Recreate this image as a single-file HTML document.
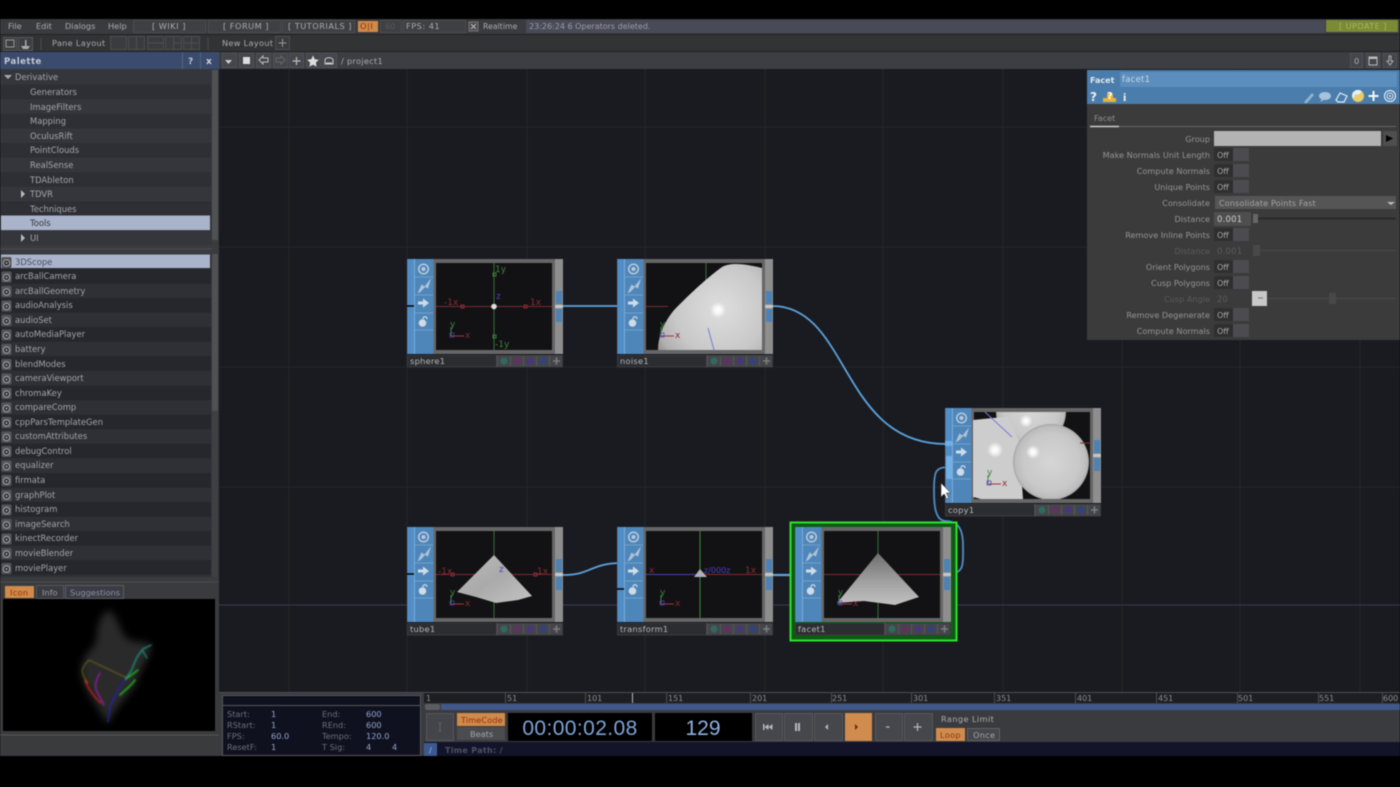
<!DOCTYPE html>
<html><head><meta charset="utf-8"><title>TouchDesigner</title>
<style>
html,body{margin:0;padding:0;background:#000;overflow:hidden}
svg{display:block}
#root{filter:blur(.5px)}
text{font-family:"DejaVu Sans",sans-serif;font-size:8.2px;fill:#a5a7ab}
.m{font-size:8.2px;fill:#a9abae}
.t{font-size:8.4px;fill:#a3a6aa}
.l{font-size:8.4px;fill:#a2a4aa}
.lab{font-size:8.15px;fill:#959595;text-anchor:end}
.dim{fill:#5a5a5a}
.off{font-size:8px;fill:#a8a8a8}
.nn{font-size:8.3px;fill:#b5b6b8;letter-spacing:.25px}
.r{fill:#8a2c34;font-size:9px}.g{fill:#3f8040;font-size:9px}.b{fill:#4a40c0;font-size:9px}
.rul{font-size:8px;fill:#8b8d92}
.inf{font-size:8.2px;fill:#6d6f78}
.val{font-size:8.2px;fill:#92a5d2}
</style></head>
<body>
<svg id="root" xmlns="http://www.w3.org/2000/svg" width="1400" height="787" viewBox="0 0 1400 787">
<defs>
<radialGradient id="hl"><stop offset="0" stop-color="#fff"/><stop offset=".35" stop-color="#fff" stop-opacity=".85"/><stop offset="1" stop-color="#fff" stop-opacity="0"/></radialGradient>
<radialGradient id="sph2"><stop offset="0" stop-color="#d6d6d6"/><stop offset=".75" stop-color="#c8c8c8"/><stop offset=".94" stop-color="#bcbcbc"/><stop offset="1" stop-color="#a4a4a4"/></radialGradient>
<radialGradient id="blob" gradientUnits="userSpaceOnUse" cx="74" cy="46" r="76"><stop offset="0" stop-color="#dedede"/><stop offset=".6" stop-color="#c8c8c8"/><stop offset=".85" stop-color="#b2b2b2"/><stop offset="1" stop-color="#8a8a8a"/></radialGradient>
<linearGradient id="cone" x1="0" y1="0" x2="1" y2="1"><stop offset="0" stop-color="#bcbcbc"/><stop offset=".5" stop-color="#aaa"/><stop offset="1" stop-color="#c4c4c4"/></linearGradient>
<linearGradient id="cone2" x1="0" y1="0" x2="0" y2="1"><stop offset="0" stop-color="#6e6e6e"/><stop offset=".55" stop-color="#a0a0a0"/><stop offset="1" stop-color="#c2c2c2"/></linearGradient>
<filter id="pc"><feGaussianBlur stdDeviation=".7"/></filter>
<filter id="pc2"><feGaussianBlur stdDeviation="4"/></filter>
<g id="opi"><rect x="2.500" y="3" width="10" height="11" rx="1.500" fill="#55565a"/><circle cx="7.500" cy="9" r="3.800" fill="#303135"/><circle cx="7.500" cy="9" r="3.200" fill="none" stroke="#a0a1a4" stroke-width="1.100"/><circle cx="7.500" cy="9" r="1" fill="#a0a1a4"/></g>
<g id="node">
<rect width="156" height="95" fill="#666"/>
<rect x="0.500" width="26" height="95" fill="#4f86ba"/>
<rect x="0.500" width="7" height="95" fill="#518ec8"/>
<path d="M7.500 0v95" stroke="#8ab3d8" stroke-width=".8"/>
<path d="M8 18h18M8 36h18M8 54h18M8 71h18" stroke="#7da8cf" stroke-width=".8"/>
<rect x="26.500" width="122" height="95" fill="#666"/>
<rect x="29" y="4" width="116" height="87" fill="#121214"/>
<rect x="148" width="8" height="95" fill="#8e8e8e"/>
<rect x="149" y="32" width="6" height="13" fill="#4c82b4"/><rect x="149" y="50" width="6" height="13" fill="#4c82b4"/>
<rect x="148" y="46" width="8" height="3" fill="#c6c6c6"/>
<circle cx="16.500" cy="10" r="4.800" fill="none" stroke="#b8cadb" stroke-width="1.500"/><circle cx="16.500" cy="10" r="2" fill="#b8cadb"/>
<path d="M10.500 34.500L14.500 25.500 17.500 27.500 24 19.500 21 29.500 18 28 14 32.500z" fill="#aec3d6"/>
<path d="M11 42.500h5v-3l6 4.500-6 4.500v-3h-5z" fill="#cfdbe6"/>
<circle cx="15.500" cy="64" r="3.800" fill="#cfdbe6"/><path d="M16 60c0-3 4-3 4 0" fill="none" stroke="#cfdbe6" stroke-width="1.300"/>
<rect y="96" width="156" height="12.500" fill="#3a3b3e"/>
<rect x="1" y="96.500" width="88" height="11" fill="#2c2d31"/>
<rect x="90" y="96.500" width="65" height="11" fill="#44454a"/>
<path d="M90 96v12M103.500 97v10M116.500 97v10M129.500 97v10M142.500 97v10" stroke="#55565a"/>
<circle cx="97" cy="102" r="3.500" fill="#2f6a5e"/><circle cx="110" cy="102" r="3.500" fill="#633062"/><circle cx="123" cy="102" r="3.500" fill="#48367a"/><circle cx="136" cy="102" r="3.500" fill="#30447a"/>
<path d="M149.500 98.500v7M146 102h7" stroke="#7c7c7c" stroke-width="1.600"/>
</g>
<g id="axes"><path d="M0 0h13" stroke="#a83438"/><path d="M0 0v-9" stroke="#3f8a3f"/><rect x="-1" y="-3" width="4" height="4" fill="none" stroke="#4a40c0" stroke-width=".7"/><text x="-1" y="-9" class="g">y</text><text x="14" y="2" class="r">x</text></g>
<path id="cur" d="M0 0v14l3.200-3 2.500 5 2-1-2.400-5h4.400z" fill="#fff" stroke="#222" stroke-width=".5"/>
</defs>

<rect width="1400" height="787" fill="#000"/>
<!-- network -->
<rect x="219" y="69" width="1181" height="624" fill="#1a1b20"/>
<g stroke="#24252a" stroke-width="1"><path d="M289 69v624M407 69v624M527 69v624M645 69v624M765 69v624M883 69v624M1003 69v624M1122 69v624M1240 69v624M1360 69v624"/><path d="M219 127h1181M219 247h1181M219 367h1181M219 487h1181"/></g>
<path d="M219 605h1181" stroke="#3a3b52"/>

<!-- top bar -->
<rect y="19" width="1400" height="15" fill="#3a3b3e"/>
<rect y="34" width="1400" height="1" fill="#232325"/>
<rect y="35" width="1400" height="17" fill="#323335"/>
<rect y="51" width="1400" height="1" fill="#222"/>
<text x="8" y="29" class="m">File</text><text x="36" y="29" class="m">Edit</text><text x="65" y="29" class="m">Dialogs</text><text x="108" y="29" class="m">Help</text>
<g fill="#3f4043" stroke="#4b4c50"><rect x="133.500" y="20.500" width="72" height="12"/><rect x="208.500" y="20.500" width="72" height="12"/><rect x="282.500" y="20.500" width="72" height="12"/><rect x="380.500" y="20.500" width="21" height="12"/><rect x="403.500" y="20.500" width="62" height="12"/></g>
<text x="152" y="29" class="m" letter-spacing=".5">[ WIKI ]</text><text x="223" y="29" class="m" letter-spacing=".5">[ FORUM ]</text><text x="288" y="29" class="m" letter-spacing=".5">[ TUTORIALS ]</text>
<rect x="358" y="21" width="20" height="11" fill="#d08a48"/><text x="360" y="29" style="fill:#8a2f14" letter-spacing=".6">O|I</text>
<text x="385" y="29" style="fill:#57585b">60</text><text x="406" y="29" class="m" letter-spacing=".5">FPS: 41</text>
<rect x="469" y="22" width="9" height="9" fill="#4a4a4e" stroke="#777"/><path d="M471 24l5 5M476 24l-5 5" stroke="#bbb"/>
<text x="483" y="29" class="m" style="font-size:7.800px">Realtime</text>
<rect x="526" y="20" width="799" height="13" fill="#494a57"/><text x="529" y="29" style="fill:#9b9da6;font-size:8px">23:26:24 6 Operators deleted.</text>
<rect x="1326" y="20" width="72" height="12" fill="#7a8a35"/><text x="1339" y="29" style="fill:#a9b563" letter-spacing=".4">[ UPDATE ]</text>

<g fill="#3d3e42" stroke="#55565a"><rect x="3.500" y="37.500" width="13" height="13"/><rect x="18.500" y="37.500" width="14" height="13"/></g>
<rect x="6" y="40" width="8" height="7" fill="none" stroke="#999"/><path d="M21 46h9l-2 3h-5zM25 40h1.500v6H25z" fill="#aaa"/>
<path d="M41 38v12M208 38v12" stroke="#4b4c50"/>
<text x="52" y="46" class="m" letter-spacing=".3">Pane Layout</text>
<g fill="#3a3b3e" stroke="#4d4e52"><rect x="110.500" y="36.500" width="16" height="13"/><rect x="128.500" y="36.500" width="16" height="13"/><rect x="147.500" y="36.500" width="16" height="13"/><rect x="165.500" y="36.500" width="16" height="13"/><rect x="183.500" y="36.500" width="16" height="13"/></g>
<path d="M136.500 37v12M147.500 43h16M173.500 37v12M173.500 43h8M191.500 37v12M183.500 43h16" stroke="#4d4e52"/>
<text x="222" y="46" class="m" letter-spacing=".3">New Layout</text>
<rect x="275.500" y="36.500" width="14" height="13" fill="#3a3b3e" stroke="#4d4e52"/><path d="M282.500 39v8M278.500 43h8" stroke="#999"/>

<!-- network bar -->
<rect x="219" y="52" width="1181" height="17" fill="#3c3e43"/>
<g fill="#44464b" stroke="#4f5156"><rect x="222.500" y="53.500" width="14" height="14"/><rect x="239.500" y="53.500" width="14" height="14"/><rect x="256.500" y="53.500" width="14" height="14"/><rect x="273.500" y="53.500" width="14" height="14"/><rect x="289.500" y="53.500" width="14" height="14"/><rect x="306.500" y="53.500" width="14" height="14"/><rect x="322.500" y="53.500" width="14" height="14"/><rect x="1350.500" y="53.500" width="12" height="14"/><rect x="1366.500" y="53.500" width="13" height="14"/><rect x="1383.500" y="53.500" width="13" height="14"/></g>
<path d="M225 60h7l-3.500 4z" fill="#ccc"/><rect x="243" y="57" width="7" height="7" fill="#ddd"/>
<path d="M259 60l4-4v2h5v4h-5v2z" fill="none" stroke="#bbb"/><path d="M285 60l-4-4v2h-5v4h5v2z" fill="none" stroke="#666"/>
<path d="M296.500 57v8M292.500 61h8" stroke="#bbb" stroke-width="1.200"/>
<path d="M313 55.500l1.800 3.700 4 .6-2.900 2.800.7 4-3.600-1.900-3.600 1.900.7-4-2.900-2.800 4-.6z" fill="#ddd"/>
<path d="M325 64v-4c0-3 8-3 8 0v4zM326 63h6" fill="none" stroke="#ccc"/>
<text x="341" y="64" class="m" letter-spacing=".3">/ project1</text>
<text x="1354" y="64" class="m">0</text><rect x="1369" y="57" width="8" height="8" fill="none" stroke="#bbb"/><path d="M1369 58h8" stroke="#bbb" stroke-width="2"/><path d="M1389 56h2v5h2l-3 4-3-4h2z" fill="none" stroke="#aaa"/>

<!-- palette -->
<rect y="52" width="219" height="17" fill="#3b4b6d"/>
<rect x="182" y="52" width="1" height="17" fill="#52617f"/><rect x="200" y="52" width="1" height="17" fill="#52617f"/>
<text x="4" y="64" style="font-weight:bold;fill:#c4c8d2;font-size:8.500px" letter-spacing=".5">Palette</text>
<text x="188" y="64" style="font-weight:bold;fill:#c0c4cf;font-size:9px">?</text><text x="206" y="64" style="font-weight:bold;fill:#d2d5dc;font-size:9px">x</text>
<rect y="69" width="219" height="687" fill="#36373a"/>
<g fill="#34363b"><rect y="70" width="211" height="14.600"/><rect y="99.200" width="211" height="14.600"/><rect y="128.400" width="211" height="14.600"/><rect y="157.600" width="211" height="14.600"/><rect y="186.800" width="211" height="14.600"/><rect y="230.600" width="211" height="14.600"/></g>
<g fill="#2d2f34"><rect y="84.600" width="211" height="14.600"/><rect y="113.800" width="211" height="14.600"/><rect y="143" width="211" height="14.600"/><rect y="172.200" width="211" height="14.600"/><rect y="201.400" width="211" height="14.600"/></g>
<rect x="1" y="215.500" width="209" height="14.600" fill="#a9b3c9"/>
<rect x="212" y="70" width="6" height="170" fill="#505154"/><rect x="212" y="240" width="6" height="8" fill="#3a3b3d"/>
<path d="M4 75h8l-4 4z" fill="#aaa"/>
<text x="15" y="80" class="t">Derivative</text><text x="30" y="95" class="t">Generators</text><text x="30" y="110" class="t">ImageFilters</text><text x="30" y="124" class="t">Mapping</text><text x="30" y="139" class="t">OculusRift</text><text x="30" y="153" class="t">PointClouds</text><text x="30" y="168" class="t">RealSense</text><text x="30" y="183" class="t">TDAbleton</text><text x="30" y="197" class="t">TDVR</text><text x="30" y="212" class="t">Techniques</text><text x="30" y="226" class="t" style="fill:#34363c">Tools</text><text x="30" y="241" class="t">UI</text>
<path d="M21 190v8l4-4zM21 234v8l4-4z" fill="#bbb"/>
<rect y="245" width="219" height="9" fill="#3a3b3e"/><path d="M0 249h212" stroke="#4b4c50"/>
<!-- list -->
<g fill="#2e3036"><rect y="254" width="211" height="323"/></g>
<g fill="#25272d"><rect y="269" width="211" height="14.600"/><rect y="298" width="211" height="14.600"/><rect y="327" width="211" height="14.600"/><rect y="356" width="211" height="14.600"/><rect y="385.500" width="211" height="14.600"/><rect y="414.500" width="211" height="14.600"/><rect y="443.500" width="211" height="14.600"/><rect y="473" width="211" height="14.600"/><rect y="502" width="211" height="14.600"/><rect y="531" width="211" height="14.600"/><rect y="560" width="211" height="14.600"/></g>
<rect x="1" y="254.500" width="209" height="13.500" fill="#a9b3c9"/>
<rect x="212" y="254" width="6" height="157" fill="#505154"/><rect x="212" y="411" width="6" height="166" fill="#3f4043"/>
<use href="#opi" x="-1" y="254"/><use href="#opi" x="-1" y="268.500"/><use href="#opi" x="-1" y="283"/><use href="#opi" x="-1" y="297.500"/><use href="#opi" x="-1" y="312"/><use href="#opi" x="-1" y="326.500"/><use href="#opi" x="-1" y="341"/><use href="#opi" x="-1" y="356"/><use href="#opi" x="-1" y="370.500"/><use href="#opi" x="-1" y="385"/><use href="#opi" x="-1" y="399.500"/><use href="#opi" x="-1" y="414"/><use href="#opi" x="-1" y="428.500"/><use href="#opi" x="-1" y="443"/><use href="#opi" x="-1" y="457.500"/><use href="#opi" x="-1" y="472"/><use href="#opi" x="-1" y="487"/><use href="#opi" x="-1" y="501.500"/><use href="#opi" x="-1" y="516"/><use href="#opi" x="-1" y="530.500"/><use href="#opi" x="-1" y="545"/><use href="#opi" x="-1" y="560"/>
<text x="15" y="265" class="l" style="fill:#4a5064">3DScope</text><text x="15" y="279" class="l">arcBallCamera</text><text x="15" y="294" class="l">arcBallGeometry</text><text x="15" y="308" class="l">audioAnalysis</text><text x="15" y="323" class="l">audioSet</text><text x="15" y="337" class="l">autoMediaPlayer</text><text x="15" y="352" class="l">battery</text><text x="15" y="367" class="l">blendModes</text><text x="15" y="381" class="l">cameraViewport</text><text x="15" y="396" class="l">chromaKey</text><text x="15" y="410" class="l">compareComp</text><text x="15" y="425" class="l">cppParsTemplateGen</text><text x="15" y="439" class="l">customAttributes</text><text x="15" y="454" class="l">debugControl</text><text x="15" y="468" class="l">equalizer</text><text x="15" y="483" class="l">firmata</text><text x="15" y="498" class="l">graphPlot</text><text x="15" y="512" class="l">histogram</text><text x="15" y="527" class="l">imageSearch</text><text x="15" y="541" class="l">kinectRecorder</text><text x="15" y="556" class="l">movieBlender</text><text x="15" y="571" class="l">moviePlayer</text>
<rect y="577" width="219" height="179" fill="#3a3b3d"/><path d="M0 582h219" stroke="#4b4c4e"/>
<rect x="5" y="586" width="29" height="12" fill="#d08a4a"/><text x="10" y="595.500" style="fill:#8c3312" letter-spacing=".3">Icon</text>
<rect x="36.500" y="585.500" width="27" height="13" fill="#3a3b40" stroke="#55565c"/><text x="42" y="595.500" style="fill:#9a9ca2">Info</text>
<rect x="65.500" y="585.500" width="58" height="13" fill="#3a3b44" stroke="#5a5c66"/><text x="70" y="595.500" style="fill:#8e91a0">Suggestions</text>
<rect x="3" y="599" width="212" height="132" fill="#000"/>
<path d="M0 735h219" stroke="#555"/>
<!-- point cloud -->
<g fill="none" stroke-linecap="round">
<path d="M107 611C115 610 118 625 125 637C135 645 150 640 151 646C150 655 140 670 135 685C125 700 112 710 108 725C100 708 88 695 83 680C78 665 85 655 95 645C98 635 96 620 107 611Z" fill="#555" filter="url(#pc2)" opacity=".5"/>
<g filter="url(#pc)" opacity=".85">
<path d="M89 660l38 18" stroke="#a8901c" stroke-width=".8" opacity=".8"/><path d="M89 660c-5 5-8 10-6 14 1 4 3 6 5 9" stroke="#7d7b18" stroke-width="1"/>
<path d="M85 681c4 9 9 16 16 22" stroke="#d01e1e" stroke-width="1.600"/>
<path d="M100 673c-4 7-6 13-3 19 2 4 5 8 7 13" stroke="#a01eb4" stroke-width="1.400"/>
<path d="M126 678c-6 8-13 20-16 30l-2 14" stroke="#2020c0" stroke-width="1.400"/>
<path d="M138 670l-12 9M135 680c-4 6-10 10-15 15" stroke="#1ec81e" stroke-width="1.600"/>
<path d="M151 645l-8 4-6 8-6 14c-2 3-3 5-5 7" stroke="#1f9a86" stroke-width="1.500"/><path d="M142 650l5 8" stroke="#1f9a86" stroke-width="1.200"/>
</g></g>

<!-- wires -->
<g fill="none" stroke="#5ba3dd" stroke-width="1.800">
<path d="M563 306H620"/>
<path d="M772 306C850 306 840 444 946 444"/>
<path d="M563 575C592 575 590 563 622 563"/>
<path d="M772 575H798" stroke-width="2.200"/>
<path d="M952 573C965 573 963 560 963 545C963 525 955 521 945 521C935 520 934 505 934 490C934 470 936 468 948 467" stroke="#4c8ec6"/>
</g>

<!-- facet selection -->
<rect x="790.500" y="522.500" width="166" height="118" fill="#0e5a14" stroke="#2fe02f" stroke-width="2"/>

<!-- sphere1 -->
<g transform="translate(407,259)"><use href="#node"/>
<path d="M0 47h7" stroke="#000" stroke-width="1.500"/>
<svg x="29" y="4" width="116" height="87">
<path d="M0 43.500h116" stroke="#7a2a30"/><path d="M58 0v87" stroke="#3a6e3a"/>
<rect x="25" y="42" width="3" height="3" fill="none" stroke="#8a2c34"/><rect x="88" y="42" width="3" height="3" fill="none" stroke="#8a2c34"/>
<rect x="57" y="10" width="3" height="3" fill="none" stroke="#3a7a3a"/><rect x="57" y="72" width="3" height="3" fill="none" stroke="#3a7a3a"/>
<circle cx="58" cy="43.500" r="2.800" fill="#ddd"/>
<text x="8" y="42" class="r">-1x</text><text x="94" y="42" class="r">1x</text><text x="59" y="9" class="g">1y</text><text x="59" y="84" class="g">-1y</text><text x="60" y="36" class="b">z</text>
<use href="#axes" x="15" y="73"/></svg>
<text x="3" y="105" class="nn">sphere1</text></g>

<!-- noise1 -->
<g transform="translate(617,259)"><use href="#node"/>
<svg x="29" y="4" width="116" height="87">
<path d="M0 43.500h22" stroke="#7a2a30"/><path d="M60 0v25" stroke="#3a6e3a"/>
<path d="M12 87C12 70 22 52 33 42C45 30 62 14 76 4C85 -1 100 1 116 5V87Z" fill="url(#blob)"/>
<circle cx="72" cy="47" r="8" fill="url(#hl)"/>
<path d="M62 65l6 22" stroke="#7a78df"/>
<use href="#axes" x="15" y="73"/></svg>
<text x="3" y="105" class="nn">noise1</text></g>

<!-- tube1 -->
<g transform="translate(407,527)"><use href="#node"/>
<path d="M0 47h7" stroke="#000" stroke-width="1.500"/>
<svg x="29" y="4" width="116" height="87">
<path d="M0 43.500h116" stroke="#7a2a30"/><path d="M58 0v87" stroke="#3a6e3a"/>
<rect x="15" y="42" width="3" height="3" fill="none" stroke="#8a2c34"/><rect x="98" y="42" width="3" height="3" fill="none" stroke="#8a2c34"/>
<text x="2" y="43" class="r">-1x</text><text x="101" y="43" class="r">1x</text>
<path d="M58 24L21 61 40 66 60 72 82 69 96 65z" fill="url(#cone)"/>
<text x="63" y="41" class="b">z</text>
<use href="#axes" x="15" y="73"/></svg>
<text x="3" y="105" class="nn">tube1</text></g>

<!-- transform1 -->
<g transform="translate(617,527)"><use href="#node"/>
<path d="M0 62h7" stroke="#000" stroke-width="1.500"/>
<svg x="29" y="4" width="116" height="87">
<path d="M0 43.500h116" stroke="#7a2a30"/><path d="M0 43.500h50" stroke="#4a3fb0"/><path d="M54 0v87" stroke="#3c8a3c"/>
<text x="3" y="42" class="r">x</text><text x="99" y="42" class="r">1x</text>
<text x="58" y="42" class="b" style="font-size:8px">z/000z</text>
<path d="M54 38l-6 8h13z" fill="#b0b0b8"/>
<use href="#axes" x="15" y="73"/></svg>
<text x="3" y="105" class="nn">transform1</text></g>

<!-- facet1 -->
<g transform="translate(795,527)"><use href="#node"/>
<svg x="29" y="4" width="116" height="87">
<path d="M0 43.500h116" stroke="#7a2a30"/><path d="M54 0v87" stroke="#3a6e3a"/><path d="M40 43.500h14" stroke="#4a3fb0"/>
<path d="M54 22L13 72 40 70 71 74 95 66z" fill="url(#cone2)"/>
<use href="#axes" x="15" y="73"/></svg>
<text x="3" y="105" class="nn">facet1</text></g>

<!-- copy1 -->
<g transform="translate(945,408)"><use href="#node"/>
<rect x="0" y="33" width="8" height="5" fill="#6fb0e8"/>
<rect x="1" y="48" width="6" height="23" fill="#6fb0e8"/>
<svg x="28" y="4" width="117" height="87">
<ellipse cx="58" cy="0" rx="35" ry="34" fill="url(#sph2)"/>
<path d="M0 8L20 6 35 5 46 30 50 87H8L0 85Z" fill="#cdcdcd"/>
<ellipse cx="78" cy="50" rx="38" ry="38" fill="url(#sph2)"/>
<circle cx="22" cy="38" r="8" fill="url(#hl)"/><circle cx="53" cy="9" r="6.500" fill="url(#hl)"/><circle cx="60" cy="40" r="7" fill="url(#hl)"/>
<path d="M12 0l27 25" stroke="#7a78df"/>
<path d="M107 31h10" stroke="#8a2c34"/>
<use href="#axes" x="15" y="72"/></svg>
<text x="3" y="105" class="nn">copy1</text></g>
<use href="#cur" x="941" y="483"/>

<!-- params -->
<rect x="1087" y="70" width="313" height="270" fill="#3b3b3b"/>
<rect x="1087" y="70" width="313" height="34" fill="#4a7dab"/>
<rect x="1120" y="72" width="277" height="15" fill="#5b8ebd"/>
<text x="1090" y="83" style="font-weight:bold;fill:#e2e8ee;font-size:8px">Facet</text><text x="1122" y="82" style="fill:#c9d8e6;font-size:8.400px" letter-spacing=".3">facet1</text>
<text x="1090" y="101" style="font-weight:bold;fill:#f0f0f0;font-size:12px">?</text>
<path d="M1103 102v-4h4v-3c0-3 6-3 6 0v3h3v4z" fill="#e5b53a"/><text x="1107" y="99" style="font-weight:bold;fill:#fff;font-size:10px">?</text>
<text x="1123" y="101" style="font-weight:bold;fill:#f0f0f0;font-size:12px;font-family:'Liberation Serif',serif">i</text>
<path d="M1305 101l7-8 2 2-7 8h-3z" fill="#8fb3d1"/>
<ellipse cx="1325" cy="96" rx="6" ry="4" fill="#a7c3da"/><path d="M1322 99l-2 3 4-2z" fill="#a7c3da"/>
<path d="M1336 100l4-7 7 3-3 6-6 0z" fill="none" stroke="#e4eef5" stroke-width="1.200"/>
<circle cx="1358" cy="96" r="6" fill="#e8cc6a"/><path d="M1352 97a6 6 0 0 1 10-5.500l-3 3h-4l-1 3.500z" fill="#e4eef5"/>
<path d="M1373.500 91v10M1368.500 96h10" stroke="#f4f6f8" stroke-width="2"/>
<circle cx="1390" cy="96" r="5.500" fill="none" stroke="#dde6ee" stroke-width="1.200"/><circle cx="1390" cy="96" r="3" fill="none" stroke="#dde6ee"/><circle cx="1390" cy="96" r="1" fill="#dde6ee"/>
<text x="1094" y="121" style="fill:#8f8f8f;font-size:8px">Facet</text>
<path d="M1090 126.500h29" stroke="#ccc" stroke-width="1.500"/><path d="M1119 126.500h277" stroke="#666"/>
<rect x="1214" y="131" width="167" height="15" fill="#b3b3b3"/><rect x="1383" y="131" width="14" height="15" fill="#4e4e4e"/><path d="M1386 135v7l7-3.500z" fill="#000"/>
<text x="1210" y="142" class="lab">Group</text>
<text x="1210" y="158" class="lab">Make Normals Unit Length</text>
<text x="1210" y="174" class="lab">Compute Normals</text>
<text x="1210" y="190" class="lab">Unique Points</text>
<text x="1210" y="206" class="lab">Consolidate</text>
<text x="1210" y="222" class="lab">Distance</text>
<text x="1210" y="238" class="lab">Remove Inline Points</text>
<text x="1210" y="254" class="lab dim">Distance</text>
<text x="1210" y="270" class="lab">Orient Polygons</text>
<text x="1210" y="286" class="lab">Cusp Polygons</text>
<text x="1210" y="302" class="lab dim">Cusp Angle</text>
<text x="1210" y="318" class="lab">Remove Degenerate</text>
<text x="1210" y="334" class="lab">Compute Normals</text>
<g fill="#2f2f2f"><rect x="1214" y="148" width="19" height="13"/><rect x="1214" y="164" width="19" height="13"/><rect x="1214" y="180" width="19" height="13"/><rect x="1214" y="228" width="19" height="13"/><rect x="1214" y="260" width="19" height="13"/><rect x="1214" y="276" width="19" height="13"/><rect x="1214" y="308" width="19" height="13"/><rect x="1214" y="324" width="19" height="13"/></g>
<g fill="#4b4b50"><rect x="1233" y="148" width="16" height="13"/><rect x="1233" y="164" width="16" height="13"/><rect x="1233" y="180" width="16" height="13"/><rect x="1233" y="228" width="16" height="13"/><rect x="1233" y="260" width="16" height="13"/><rect x="1233" y="276" width="16" height="13"/><rect x="1233" y="308" width="16" height="13"/><rect x="1233" y="324" width="16" height="13"/></g>
<text x="1217" y="158" class="off">Off</text><text x="1217" y="174" class="off">Off</text><text x="1217" y="190" class="off">Off</text><text x="1217" y="238" class="off">Off</text><text x="1217" y="270" class="off">Off</text><text x="1217" y="286" class="off">Off</text><text x="1217" y="318" class="off">Off</text><text x="1217" y="334" class="off">Off</text>
<rect x="1215" y="196" width="181" height="13" fill="#555"/><text x="1219" y="206" style="fill:#a5a5a5;font-size:8px" letter-spacing=".2">Consolidate Points Fast</text><path d="M1387 202h8l-4 3z" fill="#bbb"/>
<rect x="1214" y="212" width="37" height="14" fill="#4e4e4e"/><text x="1217" y="222" style="fill:#d0d0d0;font-size:8.500px" letter-spacing=".2">0.001</text>
<rect x="1253" y="214" width="5" height="9" fill="#666"/><path d="M1258 218.500h138" stroke="#252525" stroke-width="1.500"/>
<text x="1217" y="254" style="fill:#5c5c5c;font-size:8.500px" letter-spacing=".2">0.001</text><rect x="1253" y="245" width="7" height="11" fill="#484848"/><path d="M1260 250.500h136" stroke="#484848"/>
<text x="1217" y="302" style="fill:#5c5c5c;font-size:8.500px">20</text><rect x="1252" y="291" width="15" height="15" fill="#c8c8c8"/><path d="M1258 298h5" stroke="#777"/><rect x="1329" y="293" width="7" height="11" fill="#484848"/><path d="M1268 298.500h128" stroke="#4a4a4a"/>

<!-- timeline -->
<rect x="219" y="693" width="1181" height="63" fill="#3a3b3e"/>
<path d="M219 692.500h1181" stroke="#4e4f52"/>
<rect x="424" y="693" width="976" height="10" fill="#1d1e21"/>
<g stroke="#4b4c4f"><path d="M505.500 693v10M585.500 693v10M632.500 693v10M666.500 693v10M750.500 693v10M831.500 693v10M911.500 693v10M994.500 693v10M1075.500 693v10M1156.500 693v10M1237.500 693v10M1318.500 693v10M1382.500 693v10"/></g>
<path d="M632.500 693v10" stroke="#b8b8b8"/>
<g class="rul"><text x="426" y="701" class="rul">1</text><text x="507" y="701" class="rul">51</text><text x="587" y="701" class="rul">101</text><text x="668" y="701" class="rul">151</text><text x="752" y="701" class="rul">201</text><text x="832" y="701" class="rul">251</text><text x="913" y="701" class="rul">301</text><text x="996" y="701" class="rul">351</text><text x="1077" y="701" class="rul">401</text><text x="1158" y="701" class="rul">451</text><text x="1238" y="701" class="rul">501</text><text x="1319" y="701" class="rul">551</text><text x="1383" y="701" class="rul">600</text></g>
<rect x="424" y="704" width="976" height="6" fill="#3a3b3e"/><rect x="441" y="704" width="959" height="6" fill="#40598a"/><rect x="425" y="704" width="15" height="6" fill="#5c5d60" rx="2"/>
<rect x="424" y="742" width="976" height="14" fill="#13142a"/>
<rect x="424" y="743" width="13" height="13" fill="#3c5a90"/><text x="429" y="753" style="fill:#a5b5d5">/</text>
<text x="445" y="753" style="fill:#4f5261;font-weight:bold;font-size:8px" letter-spacing=".3">Time Path: /</text>
<!-- info -->
<rect x="222.500" y="695.500" width="198" height="60" fill="#10111f" stroke="#55565a"/>
<path d="M223 705.500h197" stroke="#55565a"/>
<text x="227" y="717" class="inf">Start:</text><text x="271" y="717" class="val">1</text><text x="322" y="717" class="inf">End:</text><text x="366" y="717" class="val">600</text>
<text x="227" y="728" class="inf">RStart:</text><text x="271" y="728" class="val">1</text><text x="322" y="728" class="inf">REnd:</text><text x="366" y="728" class="val">600</text>
<text x="227" y="739" class="inf">FPS:</text><text x="271" y="739" class="val">60.0</text><text x="322" y="739" class="inf">Tempo:</text><text x="366" y="739" class="val">120.0</text>
<text x="227" y="750" class="inf">ResetF:</text><text x="271" y="750" class="val">1</text><text x="322" y="750" class="inf">T Sig:</text><text x="366" y="750" class="val">4</text><text x="392" y="750" class="val">4</text>
<!-- transport -->
<rect x="426.500" y="713.500" width="27" height="27" fill="#44454a" stroke="#55565a"/><path d="M440 723v8M438.500 723h3M438.500 731h3" stroke="#5f6064"/>
<rect x="457" y="713" width="48" height="13" fill="#d08a4a"/><text x="461" y="723" style="fill:#8c3312" letter-spacing=".1">TimeCode</text>
<rect x="457" y="727" width="48" height="13" fill="#4a4c50"/><text x="470" y="737" style="fill:#a3a5a8">Beats</text>
<rect x="508" y="713" width="144" height="28" fill="#000"/><rect x="655" y="713" width="97" height="28" fill="#000"/>
<text x="580" y="735" text-anchor="middle" style="font-family:'Liberation Sans',sans-serif;font-size:21px;fill:#7fa3d8;letter-spacing:.4px">00:00:02.08</text>
<text x="703" y="735" text-anchor="middle" style="font-family:'Liberation Sans',sans-serif;font-size:21px;fill:#8fb0e0">129</text>
<g fill="#46474c" stroke="#55565a"><rect x="755.500" y="713.500" width="27" height="27"/><rect x="784.500" y="713.500" width="28" height="27"/><rect x="814.500" y="713.500" width="28" height="27"/><rect x="875.500" y="713.500" width="27" height="27"/><rect x="904.500" y="713.500" width="28" height="27"/></g>
<rect x="845" y="713" width="27" height="28" fill="#cf8c4e"/>
<path d="M763 724v6h1.500v-6zM768.500 724l-4 3 4 3zM772.500 724l-4 3 4 3z" fill="#b5b7bb"/>
<path d="M795 723h2v8h-2zM798 723h2v8h-2z" fill="#b5b7bb"/><path d="M828 724l-3 3 3 3z" fill="#b5b7bb"/><path d="M855 724l3 3-3 3z" fill="#6a2a10"/>
<path d="M886 727h3.500" stroke="#b5b7bb" stroke-width="1.300"/><path d="M917.500 723v8M913.500 727h8" stroke="#b5b7bb" stroke-width="1.200"/>
<text x="941" y="722" class="m" letter-spacing=".4">Range Limit</text>
<rect x="936" y="728" width="29" height="13" fill="#cf8c4e"/><text x="940" y="738" style="fill:#8c3312" letter-spacing=".3">Loop</text>
<rect x="967.500" y="728.500" width="32" height="12" fill="#46474c" stroke="#5f6064"/><text x="973" y="738" style="fill:#a3a5a8" letter-spacing=".3">Once</text>
<rect y="756" width="1400" height="31" fill="#000"/>
</svg>
</body></html>
